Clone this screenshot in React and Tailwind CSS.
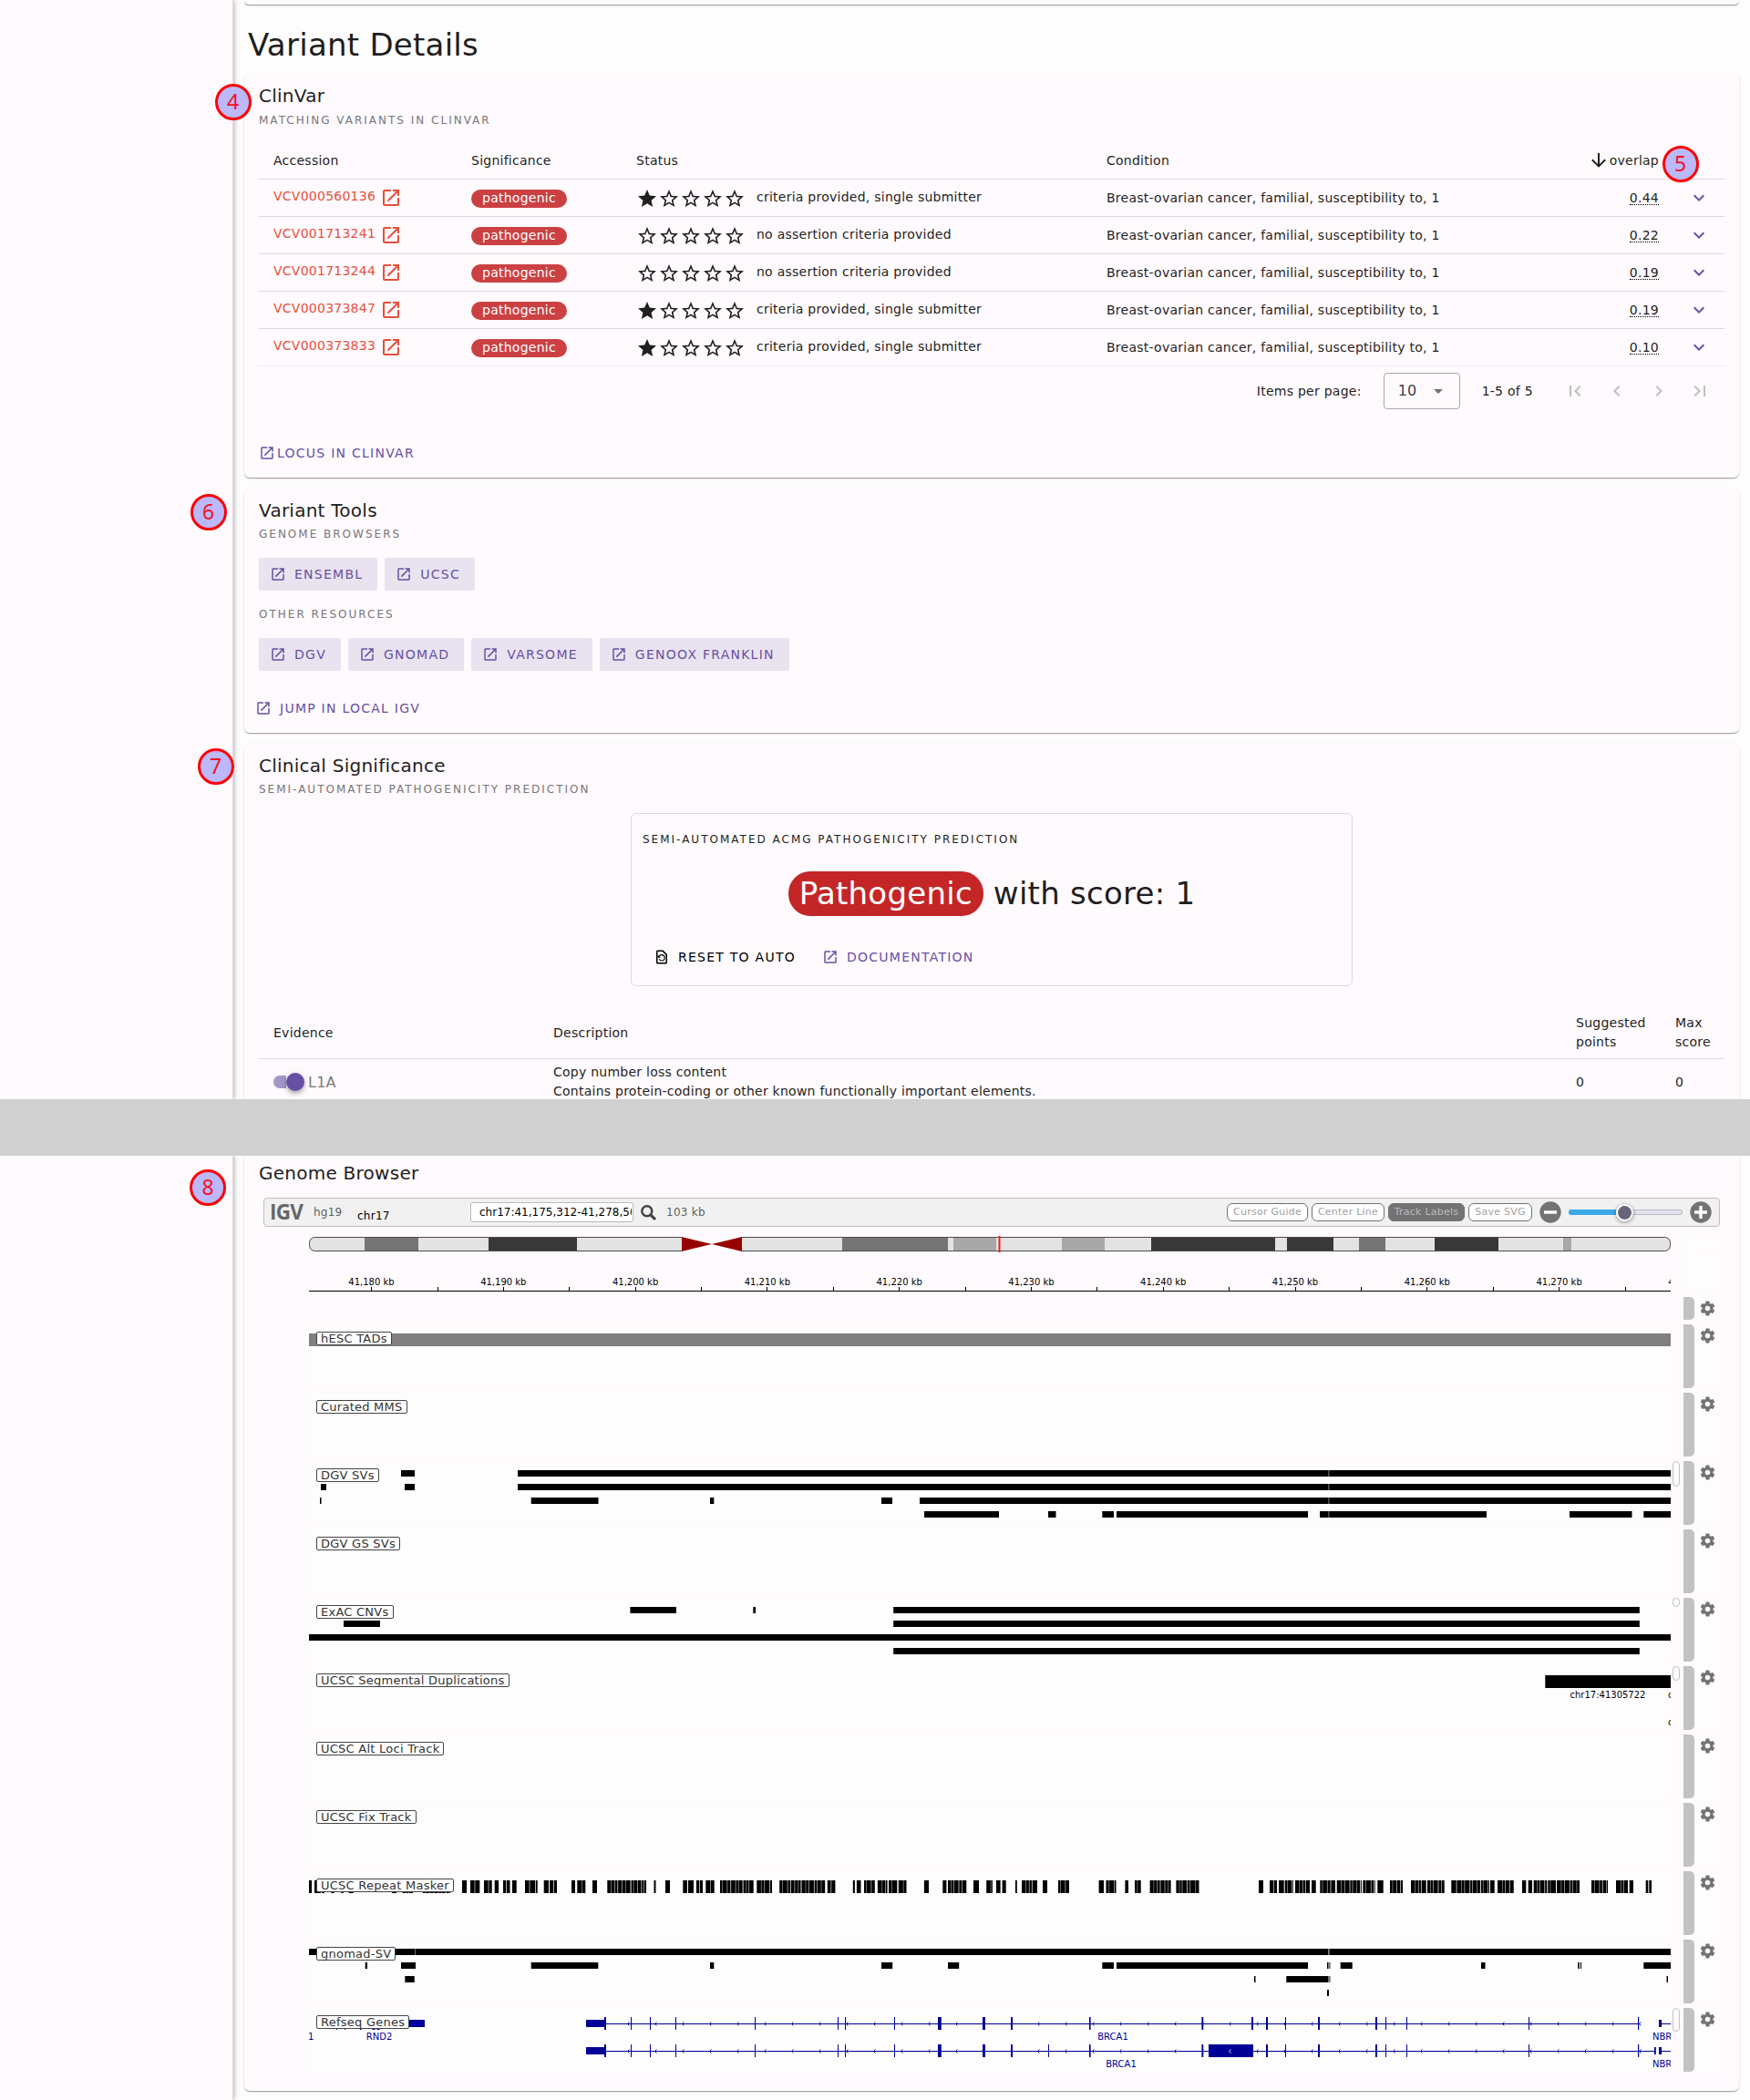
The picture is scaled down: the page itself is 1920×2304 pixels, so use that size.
import React from "react";

const MDI = {
  open: "M14,3V5H17.59L7.76,14.83L9.17,16.24L19,6.41V10H21V3M19,19H5V5H12V3H5C3.89,3 3,3.9 3,5V19A2,2 0 0,0 5,21H19A2,2 0 0,0 21,19V12H19V19Z",
  star: "M12,17.27L18.18,21L16.54,13.97L22,9.24L14.81,8.62L12,2L9.19,8.62L2,9.24L7.45,13.97L5.82,21L12,17.27Z",
  starOutline:
    "M12,15.39L8.24,17.66L9.23,13.38L5.91,10.5L10.29,10.13L12,6.09L13.71,10.13L18.09,10.5L14.77,13.38L15.76,17.66M22,9.24L14.81,8.63L12,2L9.19,8.63L2,9.24L7.45,13.97L5.82,21L12,17.27L18.18,21L16.54,13.97L22,9.24Z",
  chevronDown: "M7.41,8.58L12,13.17L16.59,8.58L18,10L12,16L6,10L7.41,8.58Z",
  arrowDown: "M11,4H13V16L18.5,10.5L19.92,11.92L12,19.84L4.08,11.92L5.5,10.5L11,16V4Z",
  menuDown: "M7,10L12,15L17,10H7Z",
  pageFirst: "M18.41,16.59L13.82,12L18.41,7.41L17,6L11,12L17,18L18.41,16.59M6,6H8V18H6V6Z",
  chevronLeft: "M15.41,16.58L10.83,12L15.41,7.41L14,6L8,12L14,18L15.41,16.58Z",
  chevronRight: "M8.59,16.58L13.17,12L8.59,7.41L10,6L16,12L10,18L8.59,16.58Z",
  pageLast: "M5.59,7.41L10.18,12L5.59,16.59L7,18L13,12L7,6L5.59,7.41M16,6H18V18H16V6Z",
  fileRestore:
    "M14,2H6A2,2 0 0,0 4,4V20A2,2 0 0,0 6,22H18A2,2 0 0,0 20,20V8L14,2M18,20H6V4H13L18,9V20M12,18C9.95,18 8.19,16.76 7.42,15H9.13C9.76,15.9 10.81,16.5 12,16.5A3.5,3.5 0 0,0 15.5,13A3.5,3.5 0 0,0 12,9.5C10.65,9.5 9.5,10.28 8.9,11.4L10.5,13H6.5V9L7.8,10.3C8.69,8.92 10.23,8 12,8A5,5 0 0,1 17,13A5,5 0 0,1 12,18Z",
  cog: "M12,15.5A3.5,3.5 0 0,1 8.5,12A3.5,3.5 0 0,1 12,8.5A3.5,3.5 0 0,1 15.5,12A3.5,3.5 0 0,1 12,15.5M19.43,12.97C19.47,12.65 19.5,12.33 19.5,12C19.5,11.67 19.47,11.34 19.43,11L21.54,9.37C21.73,9.22 21.78,8.95 21.66,8.73L19.66,5.27C19.54,5.05 19.27,4.96 19.05,5.05L16.56,6.05C16.04,5.66 15.5,5.32 14.87,5.07L14.5,2.42C14.46,2.18 14.25,2 14,2H10C9.75,2 9.54,2.18 9.5,2.42L9.13,5.07C8.5,5.32 7.96,5.66 7.44,6.05L4.95,5.05C4.73,4.96 4.46,5.05 4.34,5.27L2.34,8.73C2.21,8.95 2.27,9.22 2.46,9.37L4.57,11C4.53,11.34 4.5,11.67 4.5,12C4.5,12.33 4.53,12.65 4.57,12.97L2.46,14.63C2.27,14.78 2.21,15.05 2.34,15.27L4.34,18.73C4.46,18.95 4.73,19.03 4.95,18.95L7.44,17.94C7.96,18.34 8.5,18.68 9.13,18.93L9.5,21.58C9.54,21.82 9.75,22 10,22H14C14.25,22 14.46,21.82 14.5,21.58L14.87,18.93C15.5,18.67 16.04,18.34 16.56,17.94L19.05,18.95C19.27,19.03 19.54,18.95 19.66,18.73L21.66,15.27C21.78,15.05 21.73,14.78 21.54,14.63L19.43,12.97Z",
};

const Icon = ({ d, className = "size-6" }) => (
  <svg viewBox="0 0 24 24" className={`shrink-0 fill-current ${className}`}>
    <path d={d} />
  </svg>
);

const CARD =
  "bg-[#fffafe] shadow-[0_2px_1px_-1px_rgba(0,0,0,0.2),0_1px_1px_0_rgba(0,0,0,0.14),0_1px_3px_0_rgba(0,0,0,0.12)]";

const Heading = ({ children }) => (
  <h2 className="h-7 px-4 text-[20px] leading-7 tracking-[0.25px]">{children}</h2>
);

const Overline = ({ children, className = "px-4" }) => (
  <div className={`h-6 text-[12px] leading-6 tracking-[2px] text-[#777579] uppercase ${className}`}>{children}</div>
);

const TonalButton = ({ children }) => (
  <button className="flex h-9 items-center gap-[9px] rounded-[2px] bg-[#e9e3f0] pr-4 pl-3 text-[14px] tracking-[1.25px] text-[#6750a4] uppercase">
    <Icon d={MDI.open} className="size-[18px]" />
    {children}
  </button>
);

const CLINVAR = [
  ["VCV000560136", 1, "criteria provided, single submitter", "0.44"],
  ["VCV001713241", 0, "no assertion criteria provided", "0.22"],
  ["VCV001713244", 0, "no assertion criteria provided", "0.19"],
  ["VCV000373847", 1, "criteria provided, single submitter", "0.19"],
  ["VCV000373833", 1, "criteria provided, single submitter", "0.10"],
];

const CV_GRID = "grid grid-cols-[217px_181px_516px_422px_216px_56px] items-center";

function ClinVarCard() {
  return (
    <section className={`${CARD} h-[443px] rounded-[6px] pt-[10px]`}>
      <Heading>ClinVar</Heading>
      <Overline className="mt-px px-4">Matching variants in ClinVar</Overline>
      <div className="mx-4 mt-[12px] text-[14px] leading-5 tracking-[0.25px]">
        <div className={`${CV_GRID} h-[41px] border-b border-[#dcd9dd]`}>
          <div className="pl-4">Accession</div>
          <div className="pl-4">Significance</div>
          <div className="pl-4">Status</div>
          <div className="pl-4">Condition</div>
          <div className="flex items-center justify-end pr-4">
            <Icon d={MDI.arrowDown} />
            overlap
          </div>
          <div />
        </div>
        {CLINVAR.map(([id, stars, status, score], i) => (
          <div
            key={id}
            className={`${CV_GRID} h-[41px] border-b ${i === 4 ? "border-[#efecf0]" : "border-[#dcd9dd]"}`}
          >
            <div className="flex items-center gap-[5px] pl-4 text-[#e5503c]">
              <span className="-mt-[4px]">{id}</span>
              <Icon d={MDI.open} />
            </div>
            <div className="flex pl-4">
              <span className="mt-[2px] h-5 rounded-[10px] bg-[#cb4042] px-3 leading-[19px] text-white">pathogenic</span>
            </div>
            <div className="flex items-center pl-4">
              {[0, 1, 2, 3, 4].map((n) => (
                <Icon key={n} d={n < stars ? MDI.star : MDI.starOutline} className="mt-[1px] size-6" />
              ))}
              <span className="-mt-[2px] ml-[12px]">{status}</span>
            </div>
            <div className="pl-4">Breast-ovarian cancer, familial, susceptibility to, 1</div>
            <div className="flex justify-end pr-4">
              <span className="border-b border-dotted border-black leading-[14px]">{score}</span>
            </div>
            <div className="flex justify-center text-[#6750a4]">
              <Icon d={MDI.chevronDown} />
            </div>
          </div>
        ))}
        <div className="flex h-[54px] items-center justify-end pr-1">
          <span>Items per page:</span>
          <div className="ml-6 flex h-10 w-[84px] items-center justify-between rounded-[4px] border border-[#a9a6aa] pr-[11px] pl-[15px] text-[16px] text-[#414043]">
            10
            <Icon d={MDI.menuDown} className="size-6 text-[#717073]" />
          </div>
          <span className="mr-[24px] ml-6 w-[56px] whitespace-nowrap">1-5 of 5</span>
          <div className="flex text-[#c1bec2]">
            {[MDI.pageFirst, MDI.chevronLeft, MDI.chevronRight, MDI.pageLast].map((d) => (
              <span key={d} className="flex w-[45.6px] justify-center">
                <Icon d={d} />
              </span>
            ))}
          </div>
        </div>
        <a className="mt-[31px] flex h-5 items-center gap-[2px] tracking-[1.25px] text-[#6750a4] uppercase">
          <Icon d={MDI.open} className="size-[18px]" />
          Locus in ClinVar
        </a>
      </div>
    </section>
  );
}

function VariantToolsCard() {
  return (
    <section className={`${CARD} h-[268px] rounded-[6px] pt-[10px]`}>
      <Heading>Variant Tools</Heading>
      <Overline>Genome Browsers</Overline>
      <div className="mt-[14px] flex gap-2 px-4">
        <TonalButton>Ensembl</TonalButton>
        <TonalButton>UCSC</TonalButton>
      </div>
      <Overline className="mt-[14px] px-4">Other Resources</Overline>
      <div className="mt-[14px] flex gap-2 px-4">
        <TonalButton>DGV</TonalButton>
        <TonalButton>gnomAD</TonalButton>
        <TonalButton>varsome</TonalButton>
        <TonalButton>genoox franklin</TonalButton>
      </div>
      <a className="mt-[31px] flex h-5 items-center gap-[9px] pl-3 text-[14px] tracking-[1.25px] text-[#6750a4] uppercase">
        <Icon d={MDI.open} className="size-[18px]" />
        Jump in local IGV
      </a>
    </section>
  );
}

const EV_GRID = "grid grid-cols-[307px_1122px_109px_70px] items-center";

function SignificanceCard() {
  return (
    <section className={`${CARD} h-[480px] rounded-[6px] pt-[10px]`}>
      <Heading>Clinical Significance</Heading>
      <Overline>Semi-automated pathogenicity prediction</Overline>
      <div className="mx-auto mt-[14px] h-[190px] w-[792px] rounded-[6px] border border-[#dcd9dd] px-3 pt-4">
        <Overline className="text-[#1f1e21]!">Semi-Automated ACMG Pathogenicity Prediction</Overline>
        <div className="mt-[23px] flex h-[49px] items-center justify-center text-[34px] leading-[49px] tracking-[0.25px]">
          <span className="rounded-[24px] bg-[#c42526] px-3 text-white">Pathogenic</span>
          <span className="ml-[11px]">with score: 1</span>
        </div>
        <div className="mt-[35px] flex h-5 items-center text-[14px] tracking-[1.25px] uppercase">
          <button className="ml-3 flex items-center gap-[9px] text-black uppercase">
            <Icon d={MDI.fileRestore} className="size-[18px]" />
            Reset to auto
          </button>
          <a className="ml-[29px] flex items-center gap-[9px] text-[#6750a4]">
            <Icon d={MDI.open} className="size-[18px]" />
            Documentation
          </a>
        </div>
      </div>
      <div className="mx-4 mt-[22px] text-[14px] leading-[21px] tracking-[0.25px]">
        <div className={`${EV_GRID} h-[58px] border-b border-[#dcd9dd]`}>
          <div className="pt-[2px] pl-4">Evidence</div>
          <div className="pt-[2px] pl-4">Description</div>
          <div className="pl-4">
            Suggested
            <br />
            points
          </div>
          <div className="pl-4">
            Max
            <br />
            score
          </div>
        </div>
        <div className={`${EV_GRID} h-[50px]`}>
          <div className="flex items-center pl-4">
            <div className="flex h-[14px] w-[34px] items-center justify-end rounded-full">
              <div className="h-[14px] w-[14px] rounded-l-full bg-[#a495c8]" />
              <div className="size-5 rounded-full bg-[#674fa3] shadow-[0_2px_4px_-1px_rgba(0,0,0,0.2),0_4px_5px_0_rgba(0,0,0,0.14),0_1px_10px_0_rgba(0,0,0,0.12)]" />
            </div>
            <span className="ml-[4px] text-[16px] text-[#7b797d]">L1A</span>
          </div>
          <div className="pl-4">
            Copy number loss content
            <br />
            Contains protein-coding or other known functionally important elements.
          </div>
          <div className="pl-4">0</div>
          <div className="pl-4">0</div>
        </div>
      </div>
    </section>
  );
}

/* ---------- genome browser ---------- */

const W = 1494;

const IDEO = [
  [61, 59, "#757575"],
  [197, 97, "#383838"],
  [585, 116, "#757575"],
  [707, 47, "#a8a8a8"],
  [826, 47, "#a8a8a8"],
  [924, 136, "#383838"],
  [1073, 51, "#383838"],
  [1152, 29, "#757575"],
  [1235, 70, "#383838"],
  [1376, 9, "#a8a8a8"],
];

function Ideogram() {
  return (
    <svg width={W} height="20" viewBox={`0 -2 ${W} 20`} className="block">
      <defs>
        <clipPath id="chrom">
          <rect x="0" y="0" width={W} height="16" rx="6" />
        </clipPath>
      </defs>
      <g clipPath="url(#chrom)">
        <rect width={W} height="16" fill="#e3e3e3" />
        {IDEO.map(([x, w, c]) => (
          <rect key={x} x={x} width={w} height="16" fill={c} />
        ))}
      </g>
      <rect x="0.5" y="0.5" width={W - 1} height="15" rx="6" fill="none" stroke="#4c4c4c" />
      <rect x="409" y="0" width="66" height="16" fill="#fffafe" />
      <path d="M409,0L442,8L409,16ZM475,0L442,8L475,16Z" fill="#960000" />
      <rect x="756.5" y="-1" width="2" height="18" fill="#f21d1d" />
    </svg>
  );
}

function Ruler() {
  const majors = Array.from({ length: 11 }, (_, i) => 68.5 + i * 144.79);
  return (
    <svg width={W} height="30" className="block text-[10px]">
      {majors.map((x, i) => (
        <g key={i}>
          <text x={x} y="23" textAnchor="middle" fill="#000">
            {`41,${180 + i * 10} kb`}
          </text>
          <rect x={Math.round(x - 0.5)} y="25" width="1" height="4" />
          <rect x={Math.round(x + 72)} y="25" width="1" height="4" />
        </g>
      ))}
      <rect y="29" width={W} height="1" />
    </svg>
  );
}

const bars = (rows, h = 7) =>
  rows.flatMap((row, r) =>
    row.map(([a, b, c], i) => (
      <rect key={`${r}-${i}`} x={a} y={10 + r * 15} width={b - a} height={h} fill={c || "#000"} />
    ))
  );

const DGV = [
  [[101, 116], [229, W], [1118.5, 1119.3, "#999"]],
  [[13, 19], [105, 116], [229, W], [1118.5, 1119.3, "#999"]],
  [[12, 13.5], [243.7, 317.5], [440, 444.3], [628, 640], [670, W], [1118.5, 1119.3, "#999"]],
  [[675, 757], [811, 819.5], [870.3, 883], [886, 1096], [1109, 1292], [1383, 1451.5], [1464.3, W], [1118.5, 1119.3, "#999"]],
];

const EXAC = [
  [[352.4, 403], [487.3, 490], [641.2, 1459.8]],
  [[38, 78], [641.2, 1459.8]],
  [[0, W]],
  [[641.2, 1459.8]],
];

const GNOMAD = [
  [[0, W], [116.3, 117, "#999"], [1118, 1119.8, "#777"]],
  [[61.7, 64], [101, 117], [243.7, 317.3], [440, 444.3], [628, 640.2], [701, 713.2], [870.3, 883], [886, 1096], [1117, 1118], [1118, 1120.7, "#777"], [1131.7, 1144.7], [1286, 1290.5], [1392, 1394, "#333"], [1395, 1396], [1464.3, W]],
  [[105.3, 115.7], [1037, 1038.5], [1072.3, 1118], [1118, 1120.7, "#777"], [1489.5, 1491]],
  [[1117, 1119]],
];

const REPEATS = [
  [0, 3], [6, 8], [8, 13], [14, 17], [24.3, 27.7], [35.3, 37.7], [43.7, 48.7], [91, 96], [102.7, 114], [125, 155],
  [168, 173], [177, 181.7], [182.3, 187.3], [192, 196.7], [197.3, 200.7], [203.7, 208], [213, 216], [216.7, 220.5],
  [223, 227.7], [237, 241.7], [242.3, 248], [248.7, 250.7], [257.7, 263], [264, 268], [268.7, 272], [288, 292],
  [294.3, 303.3], [311, 316], [327.3, 370], [378.5, 380.5], [391, 396], [410.3, 415], [416, 422], [425, 428.3],
  [429, 432], [435.3, 440], [440.5, 444.7], [451, 487.7], [491.3, 508], [516.2, 566.2], [568.8, 572.6], [573.2, 577.4],
  [596.8, 598.9], [600.9, 605.5], [609, 620.8], [623.9, 634.6], [636, 645.3], [646.8, 655.5], [674.9, 680],
  [695.3, 699.4], [701, 721.3], [729, 735], [743.2, 749.9], [754, 758.6], [760.6, 764.7], [775, 776.8], [782, 799],
  [805, 810], [822, 834], [866.6, 872], [874.5, 885.5], [895.4, 899], [906, 912.7], [922.6, 945.6], [951.4, 976.5],
  [1042, 1047], [1054, 1058], [1058.6, 1062], [1064, 1069.7], [1070.7, 1079.7], [1082, 1098], [1100, 1104.7],
  [1109.3, 1126], [1127.7, 1155], [1156.3, 1169.7], [1172.3, 1178.7], [1186, 1200], [1209, 1225.7], [1227, 1245.7],
  [1253.3, 1258.7], [1259.4, 1295], [1296, 1300.7], [1304, 1321.7], [1331, 1335.3], [1337.7, 1342], [1343.7, 1358.3],
  [1359.3, 1368], [1369, 1394], [1407, 1425], [1434, 1447], [1448.7, 1453], [1466.7, 1469.3], [1470.3, 1473],
];

const STEPS = [4, 3.3, 2.4, 4.6, 3, 5, 2.6];

function Repeats() {
  return REPEATS.map(([a, b], i) => {
    const cuts = [];
    if (b - a > 6) {
      let x = a + STEPS[i % 7];
      let k = i;
      while (x < b - 1.5) {
        cuts.push(x);
        k += 1;
        x += STEPS[k % 7] + 0.6;
      }
    }
    return (
      <g key={a}>
        <rect x={a} y="10" width={b - a} height="14" />
        {cuts.map((x, n) => (
          <rect key={x} x={x} y="10" width={n % 3 === 2 ? 1 : 0.6} height="14" fill={n % 2 ? "#ddd" : "#aaa"} />
        ))}
      </g>
    );
  });
}

const NAVY = "#000096";
const EXONS = [
  [324, 2], [353, 1], [374, 1], [402, 1], [489, 1], [580, 1], [588, 1], [642, 1], [690, 3.8], [739, 3],
  [770, 2], [856, 1.6], [979.4, 1.8], [1034, 2], [1050, 2], [1071, 1], [1107, 2], [1170, 2], [1181, 1], [1204, 1],
  [1338, 1], [1458, 1.2],
];

function Gene({ y, second }) {
  const arrows = Array.from({ length: 38 }, (_, i) => 350 + i * 30);
  return (
    <g fill={NAVY}>
      <rect x="304" y={y - 4} width="20" height="8" />
      <rect x="324" y={y} width={second ? 1153 : 1136} height="1" />
      {EXONS.map(([x, w]) => (
        <rect key={x} x={x} y={y - 7} width={w} height="14" />
      ))}
      {second && <rect x="811" y={y - 7} width="1" height="14" />}
      {second && <rect x="987" y={y - 7} width="49" height="14" />}
      {arrows.map((x) => (
        <path
          key={x}
          d={`M${x + 1.5},${y - 1.5}L${x - 0.5},${y + 0.5}L${x + 1.5},${y + 2.5}`}
          fill="none"
          stroke={second && x > 987 && x < 1036 ? "#fff" : NAVY}
          strokeWidth="0.9"
        />
      ))}
      {second && <rect x="1476" y={y - 4} width="1.8" height="8" />}
      <rect x="1481" y={y - 4} width="3" height="8" />
      <rect x="1484" y={y} width="10" height="1" />
      <text x="1474" y={y + 18}>NBR1</text>
      <text x={second ? 891 : 882} y={y + 18} textAnchor="middle">BRCA1</text>
    </g>
  );
}

function Genes() {
  return (
    <>
      <g fill={NAVY}>
        <rect x="110" y="13" width="17" height="8" />
        {[[30, 1], [39, 1], [56, 1.5], [69.5, 3], [74.5, 3]].map(([x, w]) => (
          <rect key={x} x={x} y="10" width={w} height="14" />
        ))}
        <text x="-1" y="35">1</text>
        <text x="77" y="35" textAnchor="middle">RND2</text>
      </g>
      <Gene y={17} />
      <Gene y={47} second />
    </>
  );
}

const TRACKS = [
  { name: "hESC TADs", body: <rect y="10" width={W} height="14" fill="#808080" /> },
  { name: "Curated MMS" },
  { name: "DGV SVs", body: bars(DGV), thumb: "h-7" },
  { name: "DGV GS SVs" },
  { name: "ExAC CNVs", body: bars(EXAC), thumb: "h-[10px]" },
  {
    name: "UCSC Segmental Duplications",
    thumb: "h-4",
    body: (
      <>
        <rect x="1356.3" y="10" width="140" height="14" />
        <text x="1425" y="35" textAnchor="middle">chr17:41305722</text>
        <text x="1491" y="35">chr17:41305722</text>
        <text x="1491" y="65">chr17:41305722</text>
      </>
    ),
  },
  { name: "UCSC Alt Loci Track" },
  { name: "UCSC Fix Track" },
  { name: "UCSC Repeat Masker", body: <Repeats /> },
  { name: "gnomad-SV", body: bars(GNOMAD) },
  { name: "Refseq Genes", body: <Genes />, thumb: "h-[26px]" },
];

function Gutter({ height }) {
  return (
    <>
      <div className={`w-3 rounded-r-[5px] bg-[#c2c2c2] ${height}`} />
      <div className={`flex w-7 justify-center bg-[#fdfdfd] pt-[3px] text-[#737373] ${height}`}>
        <Icon d={MDI.cog} className="size-[19px]" />
      </div>
    </>
  );
}

const ToolButton = ({ children, active, width }) => (
  <button
    className={`h-5 rounded-[6px] border border-[#737373] text-[11px] leading-[18px] ${width} ${
      active ? "bg-[#737373] text-[#b9b9b9]" : "bg-white text-[#a3a3a3]"
    }`}
  >
    {children}
  </button>
);

const RoundButton = ({ plus }) => (
  <svg viewBox="0 0 24 24" className="size-6 shrink-0">
    <circle cx="12" cy="12" r="11.7" fill="#737373" />
    <path d={plus ? "M5,12H19M12,5V19" : "M5,12H19"} stroke="#fff" strokeWidth="3.4" />
  </svg>
);

function IgvToolbar() {
  return (
    <div className="ml-[21px] flex h-8 w-[1598px] items-center rounded-[4px] border border-[#bfbfbf] bg-[#f1f1f1] text-[12px] text-[#5f5f5f]">
      <span className="ml-[6px] w-[37px] font-['Open_Sans'] text-[22.5px] leading-6 font-bold tracking-[-0.8px] text-[#666]">
        IGV
      </span>
      <span className="ml-[11px] w-[32px]">hg19</span>
      <span className="mt-[7px] ml-[16px] w-[124px] text-black">chr17</span>
      <div className="h-[22px] w-[179px] overflow-hidden rounded-[3px] border border-[#bbb] bg-white pr-px pl-2 leading-5 tracking-normal whitespace-nowrap text-black">
        <div className="ml-px overflow-hidden">chr17:41,175,312-41,278,500</div>
      </div>
      <svg viewBox="0 0 16 16" className="ml-[8px] size-[17px] text-[#444]" fill="none" stroke="currentColor">
        <circle cx="6.4" cy="6.4" r="5.2" strokeWidth="2.3" />
        <path d="M10.2,10.2L15,15" strokeWidth="2.9" />
      </svg>
      <span className="ml-[11px]">103 kb</span>
      <div className="ml-auto flex items-center gap-1 pr-[8px]">
        <ToolButton width="w-[89px]">Cursor Guide</ToolButton>
        <ToolButton width="w-[80px]">Center Line</ToolButton>
        <ToolButton width="w-[84px]" active>
          Track Labels
        </ToolButton>
        <ToolButton width="w-[70px]">Save SVG</ToolButton>
        <div className="ml-1 flex items-center gap-2">
          <RoundButton />
          <div className="flex h-[6px] w-[125px] items-center rounded-full border border-[#b9b9c8] bg-[#e4e3ec]">
            <div className="-ml-px h-[6px] w-[52px] rounded-l-full bg-[#3ba9e8]" />
            <div className="size-[19px] rounded-full border-2 border-white bg-[#67637a] shadow-[0_1px_4px_rgba(0,0,0,0.45)]" />
          </div>
          <RoundButton plus />
        </div>
      </div>
    </div>
  );
}

function GenomeBrowserCard() {
  return (
    <section className={`${CARD} h-[1026px] rounded-b-[6px] pt-[5px] tracking-[0.25px]`}>
      <Heading>Genome Browser</Heading>
      <div className="h-[13px]" />
      <IgvToolbar />
      <div className="ml-[71px] flex w-[1548px]">
        <div className="w-[1494px] pt-[9px] tracking-normal">
          <Ideogram />
          <div className="h-[12px]" />
          <Ruler />
        </div>
        <div className="mt-[7px] ml-[14px] w-3 bg-[#fdfdfd]" />
        <div className="mt-[11px] flex w-7 flex-col gap-[5px]">
          <div className="h-4 bg-[#fdfdfd]" />
          <div className="h-10 bg-[#fdfdfd]" />
        </div>
      </div>
      <div className="mt-[5px] ml-[71px] flex w-[1548px]">
        <div className="w-[1508px]" />
        <Gutter height="h-[25px]" />
      </div>
      {TRACKS.map((t) => (
        <div key={t.name} className="mt-[5px] ml-[71px] flex h-[70px] w-[1548px]">
          <div className="relative w-[1494px] bg-[#fdfdfd]">
            <svg width={W} height="70" className="block overflow-hidden text-[10px] tracking-normal">
              {t.body}
            </svg>
            <span className="absolute top-2 left-2 h-[15px] rounded-[2px] border border-[#444] bg-white px-1 text-[13px] leading-[13px] whitespace-nowrap text-[#333]">
              {t.name}
            </span>
          </div>
          <div className="w-[14px] pl-[2px]">
            {t.thumb && <div className={`w-2 rounded-full border border-[#c4c2c6] ${t.thumb}`} />}
          </div>
          <Gutter height="h-[70px]" />
        </div>
      ))}
    </section>
  );
}

const Sidebar = () => (
  <aside className="z-10 w-[256px] shrink-0 border-r border-[#dedbdf] bg-[#fffafe] shadow-[1px_0_5px_rgba(0,0,0,0.3)]" />
);

const BADGES = [
  [4, 255.5, 112],
  [5, 1843.5, 179.5],
  [6, 228.5, 562],
  [7, 236.5, 840.5],
  [8, 228, 1303],
];

export default function App() {
  return (
    <div className="relative h-[2304px] w-[1920px] overflow-hidden bg-[#fdfdfd] font-['DejaVu_Sans',sans-serif] text-[#1f1e21]">
      <div className="flex h-[1206px] overflow-hidden">
        <Sidebar />
        <main className="w-[1664px] px-3">
          <div className={`${CARD} h-[5px] rounded-b-[6px]`} />
          <h1 className="flex h-[76px] items-center pt-[11px] pl-1 text-[34px] leading-10 tracking-[0.25px]">
            Variant Details
          </h1>
          <div className="flex flex-col gap-3">
            <ClinVarCard />
            <VariantToolsCard />
            <SignificanceCard />
          </div>
        </main>
      </div>
      <div className="h-[62px] bg-[#d0d0d0]" />
      <div className="flex h-[1036px] overflow-hidden">
        <Sidebar />
        <main className="w-[1664px] px-3">
          <GenomeBrowserCard />
        </main>
      </div>
      {BADGES.map(([n, x, y]) => (
        <span
          key={n}
          className="absolute z-20 flex size-10 -translate-x-1/2 -translate-y-1/2 items-center justify-center rounded-full border-[3px] border-[#fb0007] bg-[#bbb8fb] pb-px font-['Noto_Sans'] text-[23px] leading-none text-[#f5101c]"
          style={{ left: x, top: y }}
        >
          {n}
        </span>
      ))}
    </div>
  );
}
